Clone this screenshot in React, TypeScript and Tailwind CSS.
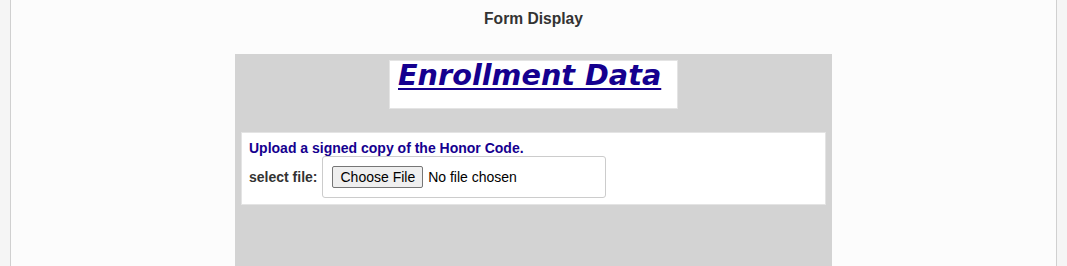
export default function App() {
  return (
    <div
      className="h-[266px] overflow-hidden bg-[#f5f5f5] px-[10px]"
      style={{ fontFamily: '"Liberation Sans", Arial, sans-serif' }}
    >
      <div className="h-full border-x border-[#d0d0d0] bg-[#fcfcfc]">
        <h2 className="pt-[10px] text-center text-[15.6px] font-bold leading-[18px] text-[#333]">
          Form Display
        </h2>

        <div className="mx-auto mt-[26px] h-[260px] w-[597px] bg-[#d3d3d3] px-[6px] pt-[6px]">
          <div className="mx-auto h-[49px] w-[289px] border border-[#e4e4e4] bg-white pl-[8px]">
            <h1
              className="text-[28.7px] font-bold italic leading-[28px] text-[#15008f] underline decoration-2 underline-offset-[3px]"
              style={{ fontFamily: '"DejaVu Sans", Verdana, sans-serif' }}
            >
              Enrollment Data
            </h1>
          </div>

          <div className="mt-[23px] border border-[#e4e4e4] bg-white px-[7px] pb-[6px] pt-[7px] text-[14px]">
            <p className="font-bold leading-[16px] text-[#15008f]">
              Upload a signed copy of the Honor Code.
            </p>
            <div className="flex items-center gap-[5px]">
              <label className="font-bold text-[#333]">select file:</label>
              <div className="w-[284px] rounded-[3px] border border-[#cccccc] px-[9px] py-[9px]">
                <input
                  type="file"
                  className="block text-[14px] leading-[16px] text-black file:mr-[5px] file:rounded-[2px] file:border file:border-[#767676] file:bg-[#efefef] file:px-[7px] file:py-[2px] file:text-black"
                />
              </div>
            </div>
          </div>
        </div>
      </div>
    </div>
  );
}
